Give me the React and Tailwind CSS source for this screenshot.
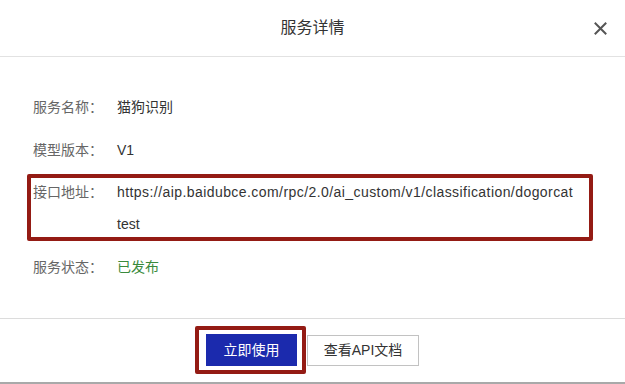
import React from "react";

const font = { fontFamily: '"Liberation Sans", "Noto Sans CJK SC", sans-serif' };

function Row({ label, children, className = "" }) {
  return (
    <div className={"relative flex pl-[33px] leading-[32px] text-[14px] " + className}>
      <div className="w-[84px] shrink-0 text-[#666]">{label}</div>
      <div className="text-[#333]">{children}</div>
    </div>
  );
}

export default function App() {
  return (
    <div className="w-[625px] h-[384px] bg-white flex flex-col overflow-hidden" style={font}>
      <div className="h-[57px] shrink-0 grid grid-cols-[1fr_auto_1fr] items-center border-b border-[#e2e2e2]">
        <div />
        <div className="text-[16px] text-[#333] pb-[1px]">服务详情</div>
        <div className="flex justify-end pr-[18px]">
          <svg width="13" height="13" viewBox="0 0 13 13">
            <path d="M1.5 1.5 L11.5 11.5 M11.5 1.5 L1.5 11.5" stroke="#555" strokeWidth="2" strokeLinecap="square" />
          </svg>
        </div>
      </div>
      <div className="flex-1 flex flex-col gap-[10.5px] pt-[34px] pb-[35px] border-b border-[#dcdcdc]">
        <Row label="服务名称：">猫狗识别</Row>
        <Row label="模型版本：">V1</Row>
        <Row label="接口地址：">
          <span className="tracking-[0.43px]">https://aip.baidubce.com/rpc/2.0/ai_custom/v1/classification/dogorcat</span>
          <br />
          <span>test</span>
          <div className="absolute left-[27px] right-[32px] top-[-2px] bottom-[-1px] border-[4px] border-[#941b14] rounded-[2px] pointer-events-none" />
        </Row>
        <Row label="服务状态："><span className="text-[#3a8a3c]">已发布</span></Row>
      </div>
      <div className="h-[63px] shrink-0 flex items-center justify-center gap-[10px]">
        <div className="relative">
          <button className="w-[91px] h-[32px] bg-[#1b2aad] text-white text-[14px]">立即使用</button>
          <div className="absolute left-[-11px] right-[-9px] top-[-8px] bottom-[-8px] border-[4px] border-[#941b14] rounded-[2px] pointer-events-none" />
        </div>
        <button className="w-[112px] h-[31px] border border-[#c2c2c2] bg-white text-[#333] text-[14px]">查看API文档</button>
      </div>
      <div className="h-[3px] shrink-0 bg-[#a9a9a9]" />
    </div>
  );
}
